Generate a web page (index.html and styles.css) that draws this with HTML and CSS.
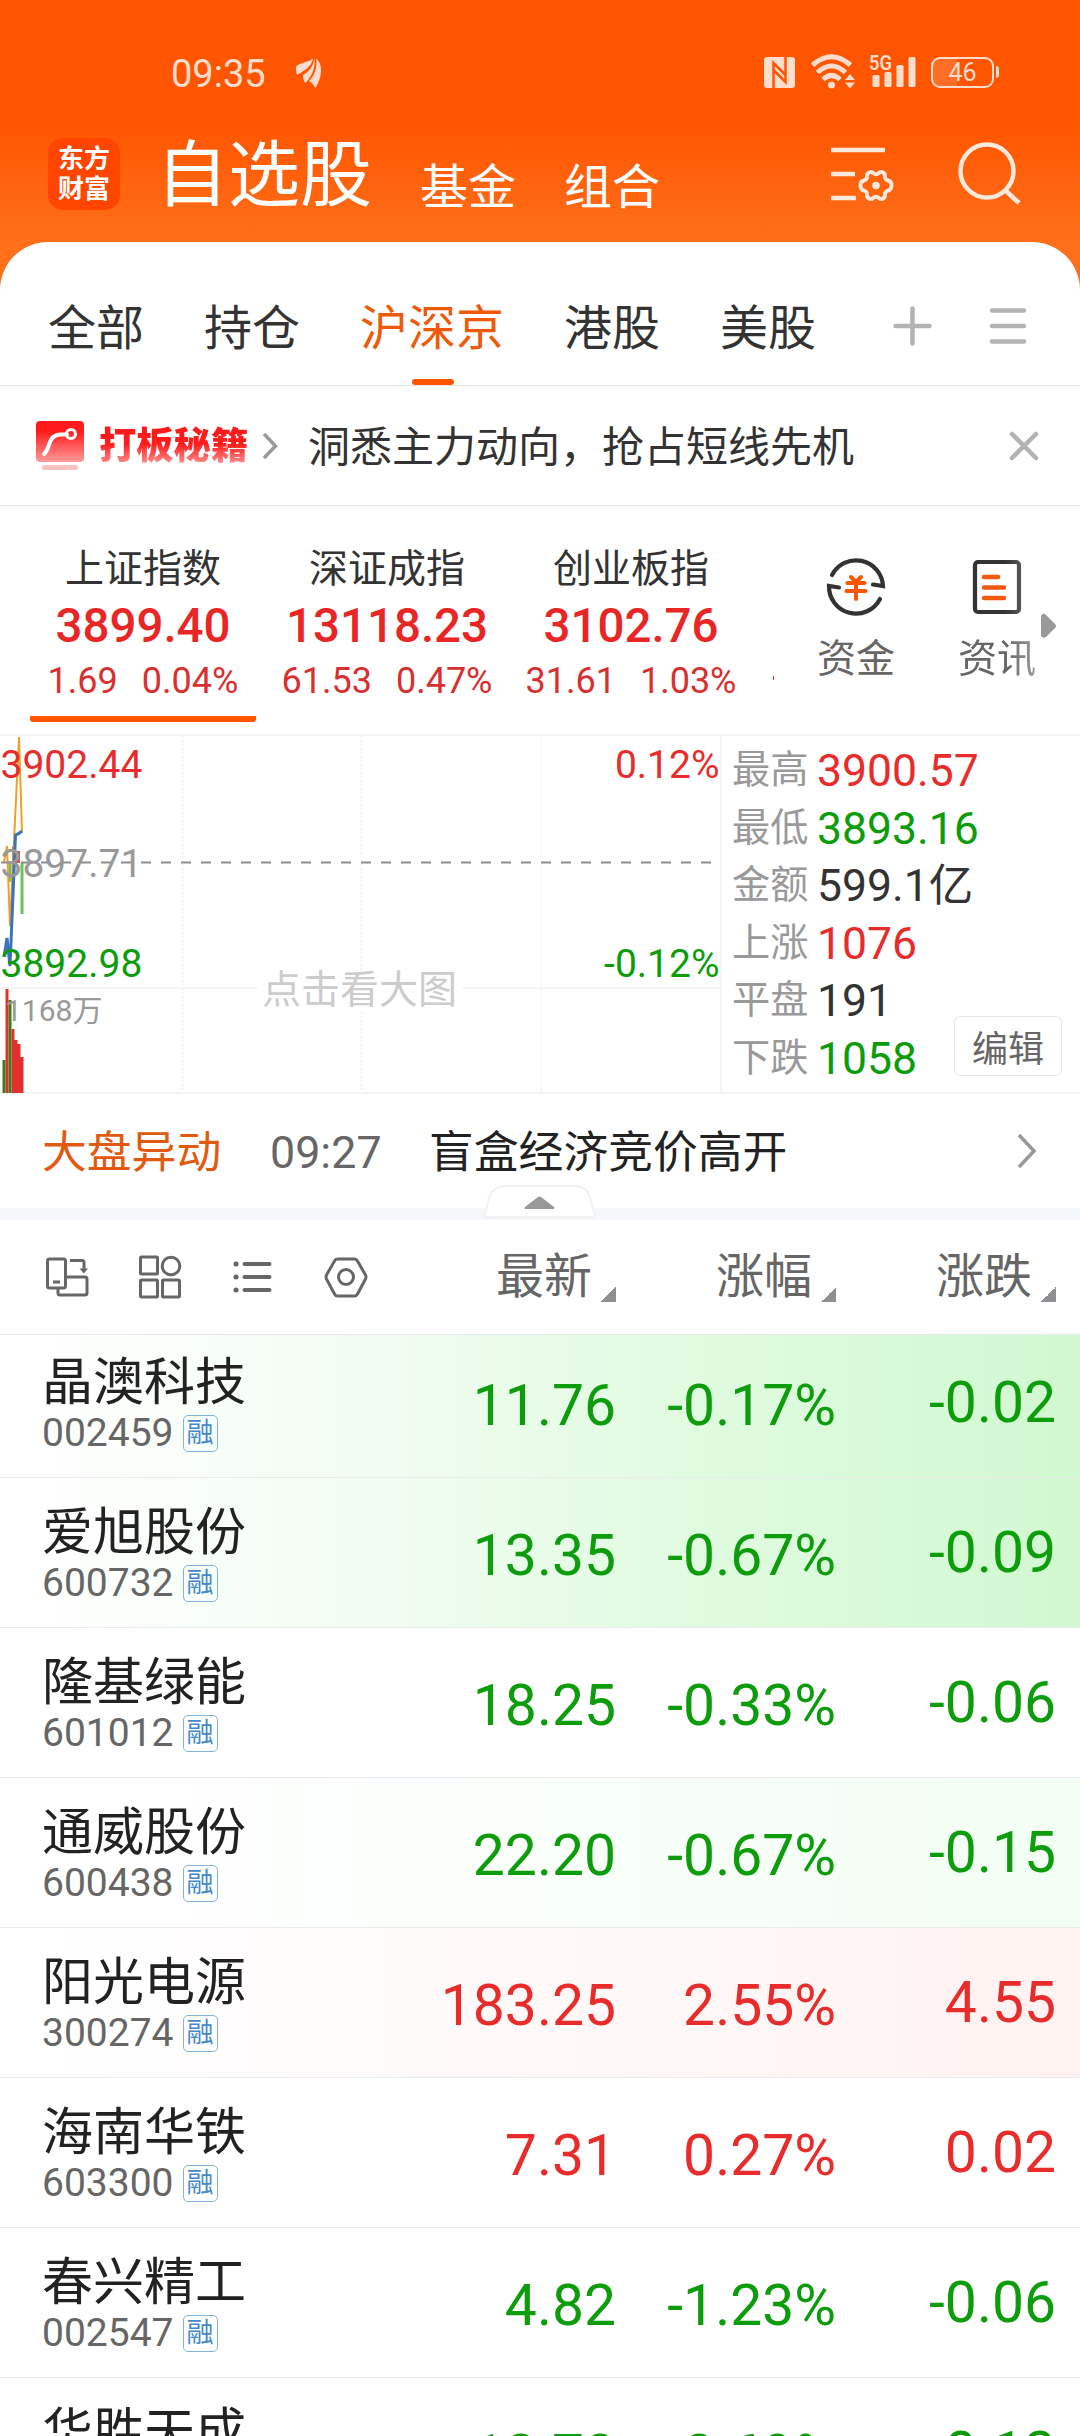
FILE: index.html
```
<!DOCTYPE html>
<html lang="zh-CN">
<head>
<meta charset="utf-8">
<title>自选股</title>
<link rel="stylesheet" href="styles.css">
</head>
<body>
<header class="header">
  <div class="status">
    <span class="time">09:35</span>
    <svg class="feather" width="28" height="30" viewBox="0 0 28 30">
      <path d="M1 8.500 C6 4 12 5 18 .5 C16.500 8 11 12 2 17 C1 14 .8 11 1 8.500Z"/>
      <path d="M19.500 .5 C20.500 10 17 18 10.500 25 C8.500 23 8 20.500 8 17 C14 13.500 18 9 19.500 .5Z"/>
      <path d="M21.300 .5 C28 6 27.500 19 20.500 30 C18.500 27 17 24.500 14 23 C20 17 22 10 21.300 .5Z"/>
    </svg>
    <div class="status-right">
      <svg class="nfc" width="31" height="31" viewBox="0 0 31 31">
        <rect width="31" height="31" rx="3"/>
        <path d="M9.500 31V6L21.500 18M21.500 0V25L9.500 13" fill="none" stroke="#ff5500" stroke-width="2.500"/>
      </svg>
      <svg class="wifi" width="45" height="35" viewBox="0 0 45 35">
        <g fill="none" stroke="#ffddcc" stroke-width="5">
          <path d="M1.500 11 Q20.500 -5.500 39.500 11"/>
          <path d="M6.500 18.500 Q20.500 5.500 34.500 18.500"/>
          <path d="M12 25.500 Q20.500 17.500 29 25.500"/>
        </g>
        <circle cx="20.500" cy="31" r="3.500"/>
        <path d="M34 26h10l-5-6zM34 28.500h10l-5 6z"/>
      </svg>
      <svg class="signal" width="48" height="34" viewBox="0 0 48 34">
        <text x="0" y="16" font-size="21" font-weight="600" textLength="23" lengthAdjust="spacingAndGlyphs">5G</text>
        <rect x="3.500" y="21" width="7" height="12" rx="1.500"/>
        <rect x="15.500" y="18" width="7" height="15" rx="1.500"/>
        <rect x="27.500" y="11" width="7" height="22" rx="1.500"/>
        <rect x="39.500" y="3" width="7" height="30" rx="1.500"/>
      </svg>
      <div class="battery">46</div>
    </div>
  </div>
  <div class="nav">
    <div class="logo"><span>东方</span><span>财富</span></div>
    <h1>自选股</h1>
    <span class="nav-item">基金</span>
    <span class="nav-item">组合</span>
    <svg class="nav-set" width="64" height="62" viewBox="0 0 64 62" fill="none" stroke="#ffe9dc" stroke-width="4.500">
      <path d="M0 8h54M0 32h24M0 56h25"/>
      <path stroke-width="3.800" stroke-linejoin="round" d="M38 30.500 Q40.500 29 42 31 Q45 33.500 48 31 Q49.500 29 52 30.500 Q54.500 32 54 35 Q54 37.500 57 38.500 Q60.500 39 60.500 43.500 Q60.500 48 57 48.500 Q54 49.500 54 52.500 Q54.500 55 52 56.500 Q49.500 58 48 56 Q45 53.500 42 56 Q40.500 58 38 56.500 Q35.500 55 36 52.500 Q36 49.500 33 48.500 Q29.500 48 29.500 43.500 Q29.500 39 33 38.500 Q36 37.500 36 35 Q35.500 32 38 30.500Z"/>
      <circle cx="45" cy="43.500" r="3.800" fill="#ffe9dc" stroke="none"/>
    </svg>
    <svg class="nav-search" width="64" height="64" viewBox="0 0 64 64" fill="none" stroke="#ffe9dc" stroke-width="4.500">
      <circle cx="29" cy="29" r="26.500"/>
      <path d="M47 48L61 61"/>
    </svg>
  </div>
</header>

<main class="sheet">
  <nav class="tabs">
    <span>全部</span>
    <span>持仓</span>
    <span class="on">沪深京</span>
    <span>港股</span>
    <span>美股</span>
    <svg class="plus" width="40" height="40" viewBox="0 0 40 40"><path d="M2.500 20h34M19.500 2.500v35"/></svg>
    <svg class="menu" width="38" height="40" viewBox="0 0 38 40"><path d="M3 4.500h32M3 20h32M3 35.500h32"/></svg>
  </nav>

  <div class="banner">
    <svg class="banner-ico" width="48" height="50" viewBox="0 0 48 50">
      <defs><linearGradient id="red" x1="0" y1="0" x2="0" y2="1"><stop offset=".25" stop-color="#ff1b1b"/><stop offset="1" stop-color="#ff9a9a"/></linearGradient></defs>
      <rect width="48" height="41" rx="4" fill="url(#red)"/>
      <path d="M8 33 C15 27 11 15 24 13.500H31" fill="none" stroke="#fff" stroke-width="4" stroke-linecap="round"/>
      <circle cx="35" cy="13" r="4.500" fill="none" stroke="#fff" stroke-width="3"/>
      <rect x="6" y="44" width="36" height="5" rx="2.500" fill="#fbc1c1"/>
    </svg>
    <b>打板秘籍</b>
    <svg class="chev" width="16" height="28" viewBox="0 0 16 28"><path d="M2 2l11.500 12L2 26"/></svg>
    <span>洞悉主力动向，抢占短线先机</span>
    <svg class="close" width="30" height="30" viewBox="0 0 30 30"><path d="M3 3l24 24M27 3L3 27"/></svg>
  </div>

  <section class="indices">
    <div class="index on">
      <p class="name">上证指数</p>
      <p class="price">3899.40</p>
      <p class="chg"><span>1.69</span><span>0.04%</span></p>
    </div>
    <div class="index">
      <p class="name">深证成指</p>
      <p class="price">13118.23</p>
      <p class="chg"><span>61.53</span><span>0.47%</span></p>
    </div>
    <div class="index">
      <p class="name">创业板指</p>
      <p class="price">3102.76</p>
      <p class="chg"><span>31.61</span><span>1.03%</span></p>
    </div>
    <i class="peek"></i>
    <div class="tool money">
      <svg width="62" height="62" viewBox="0 0 62 62" fill="none" stroke="#333" stroke-width="4.200" stroke-linecap="round">
        <path d="M7 19 A27 27 0 0 1 58 30 L48 28.500"/>
        <path d="M55 43 A27 27 0 0 1 4 30 L14 31.500"/>
        <path stroke="#ff5500" stroke-width="4" d="M26 21l5 5 5-5M22.500 27h17M21.500 35h19M31 26v17"/>
      </svg>
      <span>资金</span>
    </div>
    <div class="tool info">
      <svg width="62" height="62" viewBox="0 0 62 62" fill="none" stroke="#333" stroke-width="4.200" stroke-linecap="round">
        <rect x="9" y="6" width="44" height="50" rx="3"/>
        <path stroke="#f2590c" stroke-width="4.500" d="M18 21h14M18 31.500h20M18 42h20"/>
      </svg>
      <span>资讯</span>
    </div>
    <svg class="more" width="15" height="26" viewBox="0 0 15 26"><path d="M0 3Q2-1 5 2L14 11Q16 13 14 15L5 24Q2 26 0 23Z" fill="#999"/></svg>
  </section>

  <section class="market">
    <svg class="chart" width="720" height="360" viewBox="0 0 720 360">
      <g stroke="#f4f4f4" stroke-width="2">
        <path d="M0 1H720M0 254H720M0 359H720"/>
        <path stroke-dasharray="2 2" d="M182.500 2V358M361.500 2V358M541 2V358"/>
      </g>
      <g>
        <path fill="#6fbf5a" d="M8.500 129h3v19h-3zM20.500 129h3v51h-3z"/>
        <path fill="#d9534f" d="M12 113h2.500v16H12zM15 117h5v12h-5z"/>
      </g>
      <path d="M4 128L7 112L10 192L15 86L19 3L22 98" fill="none" stroke="#eda12c" stroke-width="2"/>
      <path d="M4 223L7 204L10 232L15.500 101L19 99.500L22 97" fill="none" stroke="#3a75ba" stroke-width="3"/>
      <g>
        <path fill="#2b861c" d="M2.500 326h3v33h-3zM8.500 266h3v93h-3z"/>
        <path fill="#e3302f" d="M5.500 255h3v104h-3zM11.500 295h3v64h-3zM14.500 306h3v53h-3zM17.500 310h3v49h-3zM20.500 323h3v36h-3z"/>
      </g>
      <path d="M1 128.500H712" stroke="#8c8c8c" stroke-width="2" stroke-dasharray="10 10"/>
      <text class="red" x="0.500" y="44">3902.44</text>
      <text class="gray" x="0.500" y="143">3897.71</text>
      <text class="green" x="0.500" y="243">3892.98</text>
      <text class="red" x="719.500" y="44" text-anchor="end">0.12%</text>
      <text class="green" x="719.500" y="243" text-anchor="end">-0.12%</text>
      <text class="vol" x="5" y="287">1168万</text>
      <rect x="257" y="236" width="206" height="40" fill="#fff"/>
      <text class="hint" x="359.500" y="269" text-anchor="middle">点击看大图</text>
    </svg>
    <div class="stats">
      <p><em>最高</em><span class="red">3900.57</span></p>
      <p><em>最低</em><span class="green">3893.16</span></p>
      <p><em>金额</em><span>599.1亿</span></p>
      <p><em>上涨</em><span class="red">1076</span></p>
      <p><em>平盘</em><span>191</span></p>
      <p><em>下跌</em><span class="green">1058</span></p>
      <button class="edit">编辑</button>
    </div>
  </section>

  <div class="news">
    <b>大盘异动</b>
    <time>09:27</time>
    <span>盲盒经济竞价高开</span>
    <svg class="chev" width="20" height="36" viewBox="0 0 20 36"><path d="M2 2l15 16L2 34"/></svg>
  </div>
  <div class="band">
    <svg width="114" height="34" viewBox="0 0 114 34">
      <path d="M1.500 32L5 16Q9 1 22 1H92Q105 1 108 16L112 32Z" fill="#fff" stroke="#f1f2f4" stroke-width="2"/>
      <path d="M42 24h29q1-1 0-2L58 12q-1.500-1-3 0L42 22q-1 1 0 2z" fill="#999"/>
    </svg>
  </div>

  <div class="cols">
    <svg class="ico" width="44" height="44" viewBox="0 0 44 44">
      <rect x="2.500" y="4" width="18" height="29" rx="2"/>
      <path d="M8 27h7M13 34v4q0 2 2 2h25q2 0 2-2V24q0-2-2-2H22M25 5.500h12q2 0 2 2V14"/>
      <path d="M34.500 13.500h8.500l-4.200 5z" fill="#666" stroke="none"/>
    </svg>
    <svg class="ico" width="44" height="44" viewBox="0 0 44 44">
      <rect x="2.500" y="2" width="17" height="17" rx="1"/><circle cx="33" cy="11" r="8.800"/>
      <rect x="2.500" y="25" width="17" height="17" rx="1"/><rect x="24.500" y="25" width="17" height="17" rx="1"/>
    </svg>
    <svg class="ico" width="44" height="44" viewBox="0 0 44 44">
      <path stroke-width="4" stroke-linecap="round" d="M13.500 9h25M13.500 22h25M13.500 35h25"/>
      <path stroke-width="5" stroke-linecap="round" d="M5 9h.1M5 22h.1M5 35h.1"/>
    </svg>
    <svg class="ico" width="44" height="44" viewBox="0 0 44 44">
      <path stroke-linejoin="round" d="M13.500 4h17q2 0 3 2l8 14q1 2 0 4l-8 15q-1 2-3 2h-17q-2 0-3-2l-8-15q-1-2 0-4l8-14q1-2 3-2z"/>
      <circle cx="22" cy="22" r="7.500"/>
    </svg>
    <div class="col">最新<i></i></div>
    <div class="col">涨幅<i></i></div>
    <div class="col">涨跌<i></i></div>
  </div>

  <ul class="list">
    <li class="green hot">
      <div class="stock"><p>晶澳科技</p><small>002459<i>融</i></small></div>
      <span>11.76</span><span>-0.17%</span><span>-0.02</span>
    </li>
    <li class="green hot">
      <div class="stock"><p>爱旭股份</p><small>600732<i>融</i></small></div>
      <span>13.35</span><span>-0.67%</span><span>-0.09</span>
    </li>
    <li class="green">
      <div class="stock"><p>隆基绿能</p><small>601012<i>融</i></small></div>
      <span>18.25</span><span>-0.33%</span><span>-0.06</span>
    </li>
    <li class="green warm">
      <div class="stock"><p>通威股份</p><small>600438<i>融</i></small></div>
      <span>22.20</span><span>-0.67%</span><span>-0.15</span>
    </li>
    <li class="red rise">
      <div class="stock"><p>阳光电源</p><small>300274<i>融</i></small></div>
      <span>183.25</span><span>2.55%</span><span>4.55</span>
    </li>
    <li class="red">
      <div class="stock"><p>海南华铁</p><small>603300<i>融</i></small></div>
      <span>7.31</span><span>0.27%</span><span>0.02</span>
    </li>
    <li class="green">
      <div class="stock"><p>春兴精工</p><small>002547<i>融</i></small></div>
      <span>4.82</span><span>-1.23%</span><span>-0.06</span>
    </li>
    <li class="green">
      <div class="stock"><p>华胜天成</p></div>
      <span>18.70</span><span>-0.69%</span><span>-0.13</span>
    </li>
  </ul>
</main>
</body>
</html>
```
FILE: styles.css
```
*{
  box-sizing:border-box;
  margin:0;
  padding:0;
}
body{
  width:1080px;
  height:2436px;
  overflow:hidden;
  background:#ff6f1a;
  color:#333;
  font-family:Roboto,"Noto Sans CJK SC",sans-serif;
}
svg{
  display:block;
  flex:none;
}
em,i{
  font-style:normal;
}
.red{
  color:#e82b2b;
  fill:#e82b2b;
}
.green{
  color:#0c9c0c;
  fill:#0c9c0c;
}

/* header */
.header{
  height:242px;
  background:linear-gradient(#ff5500 120px,#ff6f1a 242px);
  color:#fff;
}
.status{
  display:flex;
  height:126px;
  padding:54px 86px 0 171px;
  color:#ffddcc;
  fill:#ffddcc;
}
.time{
  font-size:38px;
  line-height:40px;
  width:124px;
}
.feather{
  margin-top:4px;
}
.status-right{
  display:flex;
  margin-left:auto;
}
.nfc{
  margin:3px 16px 0 0;
}
.signal{
  margin:0 14px 0 13px;
  overflow:visible;
}
.battery{
  position:relative;
  width:63px;
  height:31px;
  margin-top:3px;
  border:2.5px solid #ffddcc;
  border-radius:9px;
  background:linear-gradient(90deg,rgba(255,255,255,.15) 24px,transparent 24px);
  font-size:25px;
  line-height:27px;
  text-align:center;
}
.battery::after{
  content:"";
  position:absolute;
  right:-7px;
  top:7px;
  width:3px;
  height:12px;
  border-radius:0 3px 3px 0;
  background:#ffddcc;
}
.nav{
  display:flex;
  padding-left:48px;
}
.logo{
  display:flex;
  flex-direction:column;
  justify-content:center;
  width:72px;
  height:72px;
  margin-top:12px;
  border-radius:15px;
  background:#ff4500;
  font-size:26px;
  font-weight:700;
  line-height:30px;
  text-align:center;
}
.nav h1{
  margin:12px 0 0 36px;
  font-size:72px;
  font-weight:400;
  line-height:76px;
}
.nav-item{
  margin:34px 0 0 48px;
  font-size:48px;
  line-height:56px;
}
.nav-set{
  margin:16px 0 0 171px;
}
.nav-search{
  margin:16px 0 0 63px;
}

/* white sheet */
.sheet{
  height:2194px;
  border-radius:48px 48px 0 0;
  background:#fff;
}
.tabs{
  display:flex;
  gap:60px;
  height:144px;
  padding:0 52px 0 48px;
  border-bottom:1px solid #e4e4e4;
  font-size:48px;
  line-height:173px;
}
.tabs span{
  position:relative;
}
.tabs .on{
  color:#ee5a0b;
}
.tabs .on::after{
  content:"";
  position:absolute;
  left:52px;
  bottom:0;
  width:42px;
  height:6px;
  border-radius:3px;
  background:#ff5500;
}
.tabs svg,.close{
  fill:none;
  stroke:#b3b3b3;
  stroke-width:4.5;
  stroke-linecap:round;
}
.plus{
  margin:64px 0 0 17px;
}
.menu{
  margin:64px 0 0 -4px;
}
.banner{
  display:flex;
  align-items:center;
  height:120px;
  padding:0 41px 0 36px;
  border-bottom:1px solid #e4e4e4;
  font-size:42px;
}
.banner-ico{
  margin-right:15px;
}
.banner b{
  width:149px;
  font-size:37.3px;
  font-weight:900;
  line-height:44px;
  white-space:nowrap;
  background:linear-gradient(#ff1b1b 45%,#ff9a9a 95%);
  -webkit-background-clip:text;
  background-clip:text;
  color:transparent;
}
.banner span{
  padding-bottom:5px;
}
.chev{
  fill:none;
  stroke:#999;
  stroke-width:3.5;
}
.banner .chev{
  margin:0 30px 0 14px;
}
.close{
  margin-left:auto;
}

/* index cards */
.indices{
  position:relative;
  display:flex;
  height:228px;
  padding-left:30px;
}
.index{
  width:226px;
  height:216px;
  margin-right:18px;
  padding-top:38px;
  text-align:center;
  white-space:nowrap;
}
.index.on{
  border-bottom:6px solid transparent;
  background:linear-gradient(#ff5500,#ff5500) bottom/226px 6px no-repeat border-box;
  border-radius:3px;
}
.index .name{
  font-size:39px;
  line-height:50px;
}
.price{
  color:#e82626;
  font-size:47.5px;
  font-weight:500;
  line-height:64px;
}
.chg{
  display:flex;
  justify-content:center;
  gap:24px;
  color:#d83030;
  font-size:36px;
  line-height:46px;
}
.peek{
  width:1px;
  height:4px;
  margin:170px 0 0 11px;
  background:#d83030;
}
.tool{
  display:flex;
  flex-direction:column;
  align-items:center;
  width:80px;
  padding-top:50px;
  color:#666;
  font-size:39px;
  line-height:46px;
}
.tool span{
  margin-top:18px;
}
.money{
  margin-left:42px;
}
.info{
  margin-left:61px;
  -webkit-mask:linear-gradient(90deg,#000 60%,rgba(0,0,0,.65));
  mask:linear-gradient(90deg,#000 60%,rgba(0,0,0,.65));
}
.more{
  position:absolute;
  left:1041px;
  top:107px;
}

/* chart and numbers */
.market{
  display:flex;
  height:360px;
}
.chart{
  font-size:39px;
}
.chart .gray{
  fill:#999;
}
.chart .vol{
  fill:#999;
  font-size:30px;
}
.chart .hint{
  fill:#ccc;
}
.stats{
  position:relative;
  flex:1;
  padding:6px 0 0 10px;
  border:solid #f4f4f4;
  border-width:2px 0 2px 2px;
}
.stats p{
  display:flex;
  height:57.5px;
  font-size:44.5px;
  line-height:58px;
}
.stats em{
  width:85px;
  color:#999;
  font-size:38.2px;
  line-height:57px;
}
.edit{
  position:absolute;
  right:18px;
  bottom:16px;
  width:108px;
  height:60px;
  border:1px solid #e8e8e8;
  border-radius:6px;
  background:#fff;
  color:#666;
  font:36px Roboto,"Noto Sans CJK SC",sans-serif;
}

/* market news */
.news{
  display:flex;
  height:114px;
  padding:0 43px 0 42px;
  font-size:44.8px;
  line-height:117px;
}
.news b{
  width:228px;
  color:#e25a10;
  font-weight:400;
}
.news time{
  width:159px;
  color:#666;
}
.news span{
  color:#222;
}
.news .chev{
  margin:39px 0 0 auto;
}
.band{
  position:relative;
  height:12px;
  background:#f5f7fa;
}
.band svg{
  position:absolute;
  left:483px;
  bottom:1px;
}

/* list */
.cols{
  display:flex;
  align-items:center;
  height:115px;
  padding-left:45px;
  border-bottom:1px solid #e8e8e8;
}
.ico{
  margin-right:49px;
  fill:none;
  stroke:#666;
  stroke-width:3;
}
.col{
  display:flex;
  width:120px;
  margin-right:100px;
  color:#666;
  font-size:48px;
  line-height:114px;
  white-space:nowrap;
}
.ico + .col{
  margin-left:79px;
}
.col i{
  width:15px;
  height:15px;
  margin:67px 0 0 9px;
  background:linear-gradient(135deg,transparent 50%,#8e8e93 50%);
}
.col:last-child{
  margin-right:0;
}
.list{
  height:1101px;
  overflow:hidden;
  list-style:none;
}
.list li{
  display:flex;
  height:150px;
  padding-left:42px;
  border-bottom:1px solid #ebebeb;
  font-size:57px;
  line-height:155px;
}
.list li:first-child{
  margin-top:-7px;
}
.list li > span{
  width:220px;
  text-align:right;
}
.list li > span:last-child{
  line-height:150px;
}
.hot{
  background:linear-gradient(90deg,#fff 3%,#f2fdf2 33%,#e0fbe0 65%,#d1f8d1);
}
.warm{
  background:linear-gradient(90deg,#fff 10%,#f2fef3);
}
.rise{
  background:linear-gradient(90deg,#fff 5%,#fff2f1);
}
.stock{
  width:354px;
  padding-top:22px;
  color:#222;
}
.stock p{
  font-size:51px;
  line-height:65px;
}
.stock small{
  display:flex;
  align-items:center;
  height:36px;
  color:#666;
  font-size:39px;
  line-height:36px;
}
.stock i{
  width:35px;
  height:37px;
  margin-left:9px;
  border:1.5px solid #84b2df;
  border-radius:5px;
  color:#4388c9;
  font-size:27px;
  line-height:34px;
  text-align:center;
}
```
